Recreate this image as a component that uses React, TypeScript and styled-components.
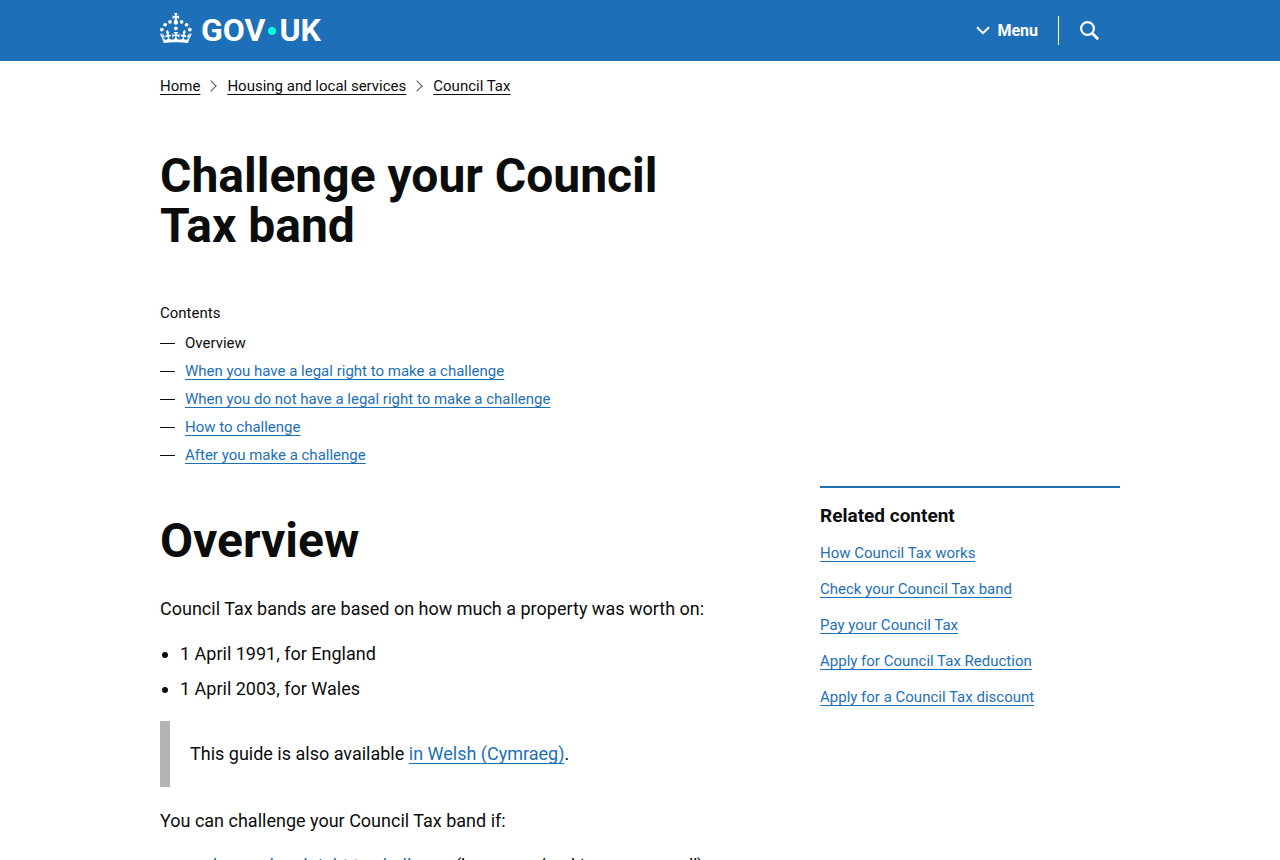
import React from 'react';
import styled, { createGlobalStyle } from 'styled-components';

const BRAND = '#1d70b8';
const INK = '#0b0c0c';

const GlobalStyle = createGlobalStyle`
  *, *::before, *::after { box-sizing: border-box; }
  body {
    margin: 0;
    background: #fff;
    color: ${INK};
    font-family: Roboto, "Liberation Sans", Arial, sans-serif;
    font-size: 18px;
    line-height: 25px;
  }
`;

const Container = styled.div`
  max-width: 960px;
  margin: 0 auto;
  @media (max-width: 1020px) {
    margin: 0 30px;
  }
`;

const Header = styled.header`
  background: ${BRAND};
  color: #fff;
`;

const HeaderBar = styled(Container)`
  display: flex;
  align-items: center;
  justify-content: space-between;
  min-height: 61px;
`;

const LogoLink = styled.a`
  display: flex;
  align-items: center;
  color: #fff;
  text-decoration: none;
  font-size: 32px;
  font-weight: 700;
  line-height: 35px;
`;

const Crown = styled.svg`
  width: 32px;
  height: 30px;
  margin: 0 9px 5px 0;
  fill: currentColor;
`;

const LogoDot = styled.span`
  width: 8px;
  height: 8px;
  margin: 0 3px;
  border-radius: 50%;
  background: #00ffe0;
`;

const HeaderNav = styled.nav`
  display: flex;
  align-items: center;
`;

const NavButton = styled.button`
  display: flex;
  align-items: center;
  gap: 7px;
  padding: 0 20px;
  border: 0;
  background: none;
  color: #fff;
  font: inherit;
  font-size: 16px;
  font-weight: 700;
  line-height: 29px;
  cursor: pointer;

  & + & {
    height: 29px;
    border-left: 1px solid #fff;
  }
`;

const Breadcrumbs = styled.ol`
  display: flex;
  flex-wrap: wrap;
  margin: 0;
  padding: 15px 0 0;
  list-style: none;
  font-size: 15px;
  line-height: 20px;
`;

const Crumb = styled.li`
  display: flex;
  align-items: center;

  & + &::before {
    content: "";
    width: 8px;
    height: 8px;
    margin: 0 12px 0 7px;
    border: solid #505a5f;
    border-width: 1px 1px 0 0;
    transform: rotate(45deg);
  }
`;

const TextLink = styled.a<{ $plain?: boolean }>`
  color: ${(p) => (p.$plain ? INK : BRAND)};
  text-decoration: underline;
  text-decoration-thickness: 1px;
  text-underline-offset: 3px;
  text-decoration-skip-ink: none;
`;

const Title = styled.h1`
  max-width: 560px;
  margin: 55px 0 52px;
  font-size: 48px;
  line-height: 50px;
`;

const ContentsLabel = styled.h2`
  margin: 0 0 10px;
  font-size: 15px;
  font-weight: 400;
  line-height: 20px;
`;

const ContentsList = styled.ol`
  display: grid;
  gap: 8px;
  margin: 0;
  padding: 0;
  list-style: none;
  font-size: 15px;
  line-height: 20px;
`;

const ContentsItem = styled.li`
  display: flex;
  align-items: center;
  gap: 10px;

  &::before {
    content: "";
    width: 15px;
    border-top: 1px solid ${INK};
  }
`;

const Columns = styled.div`
  display: grid;
  grid-template-columns: minmax(0, 1fr) 300px;
  gap: 30px;
  align-items: start;
  margin-top: 21px;

  @media (max-width: 768px) {
    grid-template-columns: minmax(0, 1fr);
  }
`;

const SectionTitle = styled.h2`
  margin: 30px 0;
  font-size: 48px;
  line-height: 50px;
`;

const Paragraph = styled.p`
  margin: 0 0 20px;
`;

const BulletList = styled.ul`
  display: grid;
  gap: 10px;
  margin: 0 0 20px;
  padding-left: 20px;
`;

const CallToAction = styled.div`
  margin: 0 0 21px;
  padding: 20px 20px 21px;
  border-left: 10px solid #b1b4b6;
`;

const Related = styled.aside`
  border-top: 2px solid ${BRAND};
  padding-top: 15px;
`;

const RelatedTitle = styled.h2`
  margin: 0 0 15px;
  font-size: 19px;
  line-height: 25px;
`;

const RelatedList = styled.ul`
  display: grid;
  gap: 16px;
  margin: 0;
  padding: 0;
  list-style: none;
  font-size: 15px;
  line-height: 20px;
`;

const crumbs = ['Home', 'Housing and local services', 'Council Tax'];

const parts = [
  'When you have a legal right to make a challenge',
  'When you do not have a legal right to make a challenge',
  'How to challenge',
  'After you make a challenge',
];

const related = [
  'How Council Tax works',
  'Check your Council Tax band',
  'Pay your Council Tax',
  'Apply for Council Tax Reduction',
  'Apply for a Council Tax discount',
];

export default function App() {
  return (
    <>
      <GlobalStyle />
      <Header>
        <HeaderBar>
          <LogoLink href="#" aria-label="GOV.UK home">
            <Crown viewBox="0 0 64 60" aria-hidden="true">
              <circle cx="20" cy="17.6" r="3.7" />
              <circle cx="10.2" cy="23.5" r="3.7" />
              <circle cx="3.7" cy="33.2" r="3.7" />
              <circle cx="31.7" cy="30.6" r="3.7" />
              <circle cx="43.3" cy="17.6" r="3.7" />
              <circle cx="53.2" cy="23.5" r="3.7" />
              <circle cx="59.7" cy="33.2" r="3.7" />
              <path d="M33.1,9.8c.2-.1.3-.3.5-.5l4.6,2.4v-6.8l-4.6,1.5c-.1-.2-.3-.3-.5-.5l1.9-5.9h-6.7l1.9,5.9c-.2.1-.3.3-.5.5l-4.6-1.5v6.8l4.6-2.4c.1.2.3.3.5.5l-2.6,8c-.9,2.8,1.2,5.7,4.1,5.7h0c3,0,5.1-2.9,4.1-5.7l-2.6-8ZM37,37.9s-3.4,3.8-4.1,6.1c2.2,0,4.2-.5,6.4-2.8l-.7,8.5c-2-2.8-4.4-4.1-5.7-3.8.1,3.1.5,6.7,5.8,7.2,3.7.3,6.7-1.5,7-3.8.4-2.6-2-4.3-3.7-1.6-1.4-4.5,2.4-6.1,4.9-3.2-1.9-4.5-1.8-7.7,2.4-10.9,3,4,2.6,7.3-1.2,11.1,2.4-1.3,6.2,0,4,4.6-1.2-2.8-3.7-2.2-4.2.2-.3,1.7.7,3.7,3,4.2,1.9.3,4.7-.9,7-5.9-1.3,0-2.4.7-3.9,1.7l2.4-8c.6,2.3,1.4,3.7,2.2,4.5.6-1.6.5-2.8,0-5.3l5,1.8c-2.6,3.6-5.2,8.7-7.3,17.5-7.4-1.1-15.7-1.7-24.5-1.7h0c-8.8,0-17.1.6-24.5,1.7-2.1-8.9-4.7-13.9-7.3-17.5l5-1.8c-.5,2.5-.6,3.7,0,5.3.8-.8,1.6-2.3,2.2-4.5l2.4,8c-1.5-1-2.6-1.7-3.9-1.7,2.3,5,5.2,6.2,7,5.9,2.3-.4,3.3-2.4,3-4.2-.5-2.4-3-3.1-4.2-.2-2.2-4.6,1.6-6,4-4.6-3.7-3.7-4.2-7.1-1.2-11.1,4.2,3.2,4.3,6.4,2.4,10.9,2.5-2.8,6.3-1.3,4.9,3.2-1.8-2.7-4.1-1-3.7,1.6.3,2.3,3.3,4.1,7,3.8,5.4-.5,5.7-4.2,5.8-7.2-1.3-.2-3.7,1-5.7,3.8l-.7-8.5c2.2,2.3,4.2,2.7,6.4,2.8-.7-2.3-4.1-6.1-4.1-6.1h10.6,0Z" />
            </Crown>
            <span>GOV</span>
            <LogoDot />
            <span>UK</span>
          </LogoLink>
          <HeaderNav aria-label="Site">
            <NavButton type="button">
              <svg width="14" height="9" viewBox="0 0 14 9" fill="none" stroke="currentColor" strokeWidth="2" aria-hidden="true">
                <path d="M1 1.2L7 7.2L13 1.2" />
              </svg>
              Menu
            </NavButton>
            <NavButton type="button" aria-label="Search GOV.UK">
              <svg width="21" height="21" viewBox="0 0 21 21" fill="none" stroke="currentColor" aria-hidden="true">
                <circle cx="8.5" cy="8.5" r="6.4" strokeWidth="2.2" />
                <path d="M13 13L19.2 19.2" strokeWidth="2.8" />
              </svg>
            </NavButton>
          </HeaderNav>
        </HeaderBar>
      </Header>

      <Container>
        <nav aria-label="Breadcrumb">
          <Breadcrumbs>
            {crumbs.map((text) => (
              <Crumb key={text}>
                <TextLink $plain href="#">{text}</TextLink>
              </Crumb>
            ))}
          </Breadcrumbs>
        </nav>

        <main>
          <Title>Challenge your Council Tax band</Title>

          <nav aria-labelledby="contents">
            <ContentsLabel id="contents">Contents</ContentsLabel>
            <ContentsList>
              <ContentsItem aria-current="page">Overview</ContentsItem>
              {parts.map((text) => (
                <ContentsItem key={text}>
                  <TextLink href="#">{text}</TextLink>
                </ContentsItem>
              ))}
            </ContentsList>
          </nav>

          <Columns>
            <article>
              <SectionTitle>Overview</SectionTitle>
              <Paragraph>Council Tax bands are based on how much a property was worth on:</Paragraph>
              <BulletList>
                <li>1 April 1991, for England</li>
                <li>1 April 2003, for Wales</li>
              </BulletList>
              <CallToAction>
                This guide is also available <TextLink href="#">in Welsh (Cymraeg)</TextLink>.
              </CallToAction>
              <Paragraph>You can challenge your Council Tax band if:</Paragraph>
              <BulletList>
                <li>
                  <TextLink href="#">you have a legal right to challenge</TextLink> (known as ‘making a proposal’)
                </li>
              </BulletList>
            </article>

            <Related aria-labelledby="related">
              <RelatedTitle id="related">Related content</RelatedTitle>
              <RelatedList>
                {related.map((text) => (
                  <li key={text}>
                    <TextLink href="#">{text}</TextLink>
                  </li>
                ))}
              </RelatedList>
            </Related>
          </Columns>
        </main>
      </Container>
    </>
  );
}
